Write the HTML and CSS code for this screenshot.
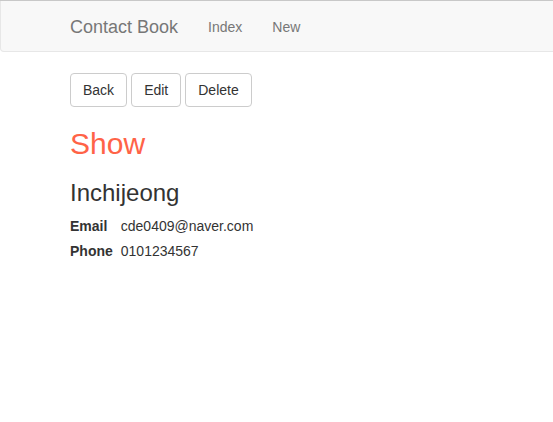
FILE: index.html
```html
<!DOCTYPE html>
<html>
<head>
<meta charset="utf-8">
<link rel="stylesheet" href="styles.css">
</head>
<body>
<nav class="navbar">
  <div class="nav-inner">
    <a class="brand">Contact Book</a>
    <a class="nav-link">Index</a>
    <a class="nav-link">New</a>
  </div>
</nav>
<main class="container">
  <div class="actions">
    <button class="btn">Back</button>
    <button class="btn">Edit</button>
    <button class="btn">Delete</button>
  </div>
  <h1 class="title">Show</h1>
  <h3 class="name">Inchijeong</h3>
  <div class="details">
    <span class="label">Email</span><span class="value">cde0409@naver.com</span>
    <span class="label">Phone</span><span class="value">0101234567</span>
  </div>
</main>
</body>
</html>
```
FILE: styles.css
```css
* { box-sizing: border-box; }
html, body { margin: 0; padding: 0; }
body {
  font-family: "Liberation Sans", Arial, sans-serif;
  font-size: 14px;
  line-height: 20px;
  color: #333;
  background: #fff;
  border-top: 1px solid #c8c8c8;
}
.navbar {
  height: 51px;
  margin-right: -10px;
  background: #f8f8f8;
  border: 1px solid #e7e7e7;
  border-top: 0;
  border-radius: 0 0 4px 4px;
}
.nav-inner {
  display: flex;
  align-items: center;
  height: 50px;
  padding-left: 54px;
  padding-top: 2px;
}
.brand {
  font-size: 18px;
  color: #777;
  padding: 15px;
  line-height: 20px;
}
.nav-link {
  color: #777;
  padding: 15px;
  line-height: 20px;
}
.container {
  padding: 21px 70px 0;
}
.actions {
  display: flex;
  gap: 4px;
}
.btn {
  font-family: inherit;
  font-size: 14px;
  line-height: 20px;
  color: #333;
  background: #fff;
  border: 1px solid #ccc;
  border-radius: 4px;
  padding: 6px 12px;
  height: 34px;
}
.title {
  font-size: 30px;
  font-weight: normal;
  color: #ff6347;
  margin: 19px 0 0;
  line-height: 36px;
}
.name {
  font-size: 24px;
  font-weight: normal;
  margin: 16px 0 0;
  line-height: 30px;
}
.details {
  display: grid;
  grid-template-columns: auto 1fr;
  column-gap: 8px;
  row-gap: 5px;
  margin-top: 8px;
}
.label { font-weight: bold; }
```
